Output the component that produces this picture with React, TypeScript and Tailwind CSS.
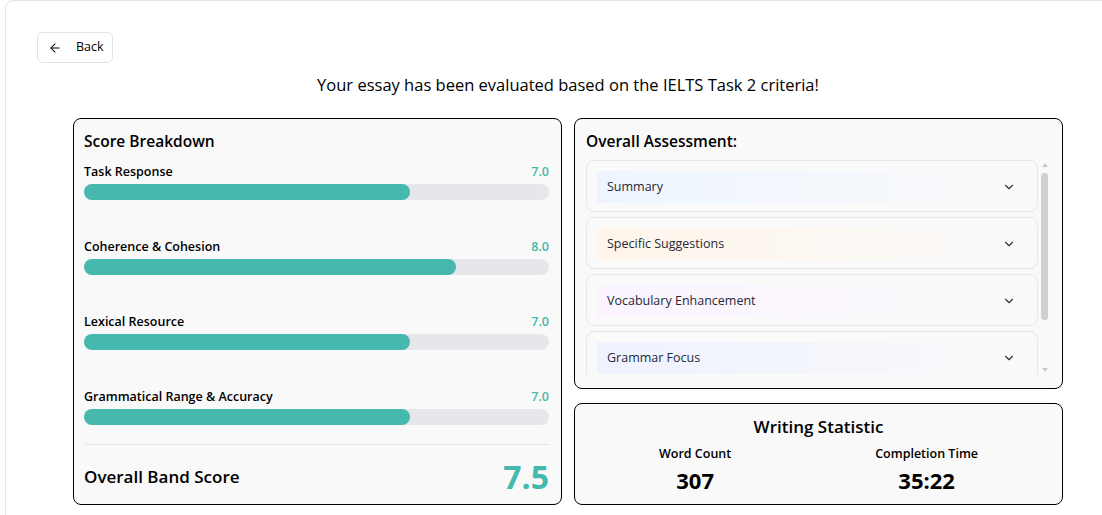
import { ArrowLeft, ChevronDown } from "lucide-react";

const scores = [
  { name: "Task Response", score: 7.0 },
  { name: "Coherence & Cohesion", score: 8.0 },
  { name: "Lexical Resource", score: 7.0 },
  { name: "Grammatical Range & Accuracy", score: 7.0 },
];

const sections = [
  { title: "Summary", bg: "from-[#eef5ff]" },
  { title: "Specific Suggestions", bg: "from-[#fff5ea]" },
  { title: "Vocabulary Enhancement", bg: "from-[#fbf4ff]" },
  { title: "Grammar Focus", bg: "from-[#eff2ff]" },
];

export default function App() {
  return (
    <div className="h-[515px] w-[1102px] overflow-hidden bg-white pl-[5px] font-['Segoe_UI','Open_Sans',sans-serif] text-black">
      <div className="w-[1126px] h-[540px] rounded-lg border border-[#e5e5e5] bg-white px-[31px] pt-[31px]">
        <button className="flex h-[31px] w-[76px] items-center rounded-md border border-[#e3e3e3] bg-white pl-[10px] text-[12.5px] font-medium">
          <ArrowLeft size={14} strokeWidth={1.75} />
          <span className="ml-[14px]">Back</span>
        </button>

        <h2 className="mt-[10px] text-center text-[16.5px] font-medium leading-6">
          Your essay has been evaluated based on the IELTS Task 2 criteria!
        </h2>

        <div className="mx-auto mt-[21px] grid w-[990px] grid-cols-2 gap-3">
          <div className="flex h-[387px] flex-col rounded-lg border border-black bg-[#f9f9f9] pl-2.5 pr-3 pt-[10px] pb-2.5">
            <h3 className="text-[15.5px] font-semibold leading-6">Score Breakdown</h3>
            <div className="mt-[9px]">
              {scores.map((s) => (
                <div key={s.name} className="mb-[37px]">
                  <div className="flex h-5 items-center justify-between">
                    <span className="text-[12.5px] font-semibold">{s.name}</span>
                    <span className="text-[12.5px] font-semibold text-[#46b8ad]">{s.score.toFixed(1)}</span>
                  </div>
                  <div className="mt-[2px] h-4 w-full rounded-full bg-[#e5e7eb]">
                    <div className="h-4 rounded-full bg-[#46b8ad]" style={{ width: `${s.score * 10}%` }} />
                  </div>
                </div>
              ))}
            </div>
            <div className="-mt-[18px] border-t border-[#e5e7eb] pt-[13px]">
              <div className="flex h-[38px] items-center justify-between">
                <span className="text-[17px] font-semibold">Overall Band Score</span>
                <span className="text-[32px] font-bold leading-none text-[#46b8ad]">7.5</span>
              </div>
            </div>
          </div>

          <div className="flex flex-col gap-[14px]">
            <div className="flex h-[271px] flex-col rounded-lg border border-black bg-[#f9f9f9] pl-[11px] pr-[12px] pt-[10px] pb-[11px]">
              <h3 className="text-[15.5px] font-semibold leading-6">Overall Assessment:</h3>
              <div className="mt-[7px] flex min-h-0 flex-1">
                <div className="flex-1 overflow-hidden">
                  <div className="flex flex-col gap-[5px]">
                    {sections.map((sec) => (
                      <div key={sec.title} className="h-[52px] shrink-0 rounded-lg border border-[#e7e7e7] bg-[#fafafa] p-[10px]">
                        <div className={`flex h-8 items-center justify-between bg-gradient-to-r ${sec.bg} to-transparent pl-2.5 pr-[11px]`}>
                          <span className="text-[12.5px] text-[#1f2937]">{sec.title}</span>
                          <ChevronDown size={14} strokeWidth={2} className="text-[#333]" />
                        </div>
                      </div>
                    ))}
                  </div>
                </div>
                <div className="flex w-[12px] flex-col items-center pl-[1px] pt-[3px] pb-[5px]">
                  <div className="h-0 w-0 border-x-[3px] border-b-[4px] border-x-transparent border-b-[#c8c8cc]" />
                  <div className="mt-[6px] h-[147px] w-[7px] rounded-full bg-[#cfcfd4]" />
                  <div className="flex-1" />
                  <div className="h-0 w-0 border-x-[3px] border-t-[4px] border-x-transparent border-t-[#c8c8cc]" />
                </div>
              </div>
            </div>

            <div className="flex h-[102px] flex-col rounded-lg border border-black bg-[#f9f9f9] px-3 pt-[11px]">
              <h3 className="text-center text-[17px] font-semibold leading-6">Writing Statistic</h3>
              <div className="mt-[3px] flex justify-around">
                <div className="flex flex-col items-center">
                  <span className="text-[12.5px] font-semibold leading-6">Word Count</span>
                  <span className="text-[22px] font-bold leading-[28px]">307</span>
                </div>
                <div className="flex flex-col items-center">
                  <span className="text-[12.5px] font-semibold leading-6">Completion Time</span>
                  <span className="text-[22px] font-bold leading-[28px]">35:22</span>
                </div>
              </div>
            </div>
          </div>
        </div>
      </div>
    </div>
  );
}
